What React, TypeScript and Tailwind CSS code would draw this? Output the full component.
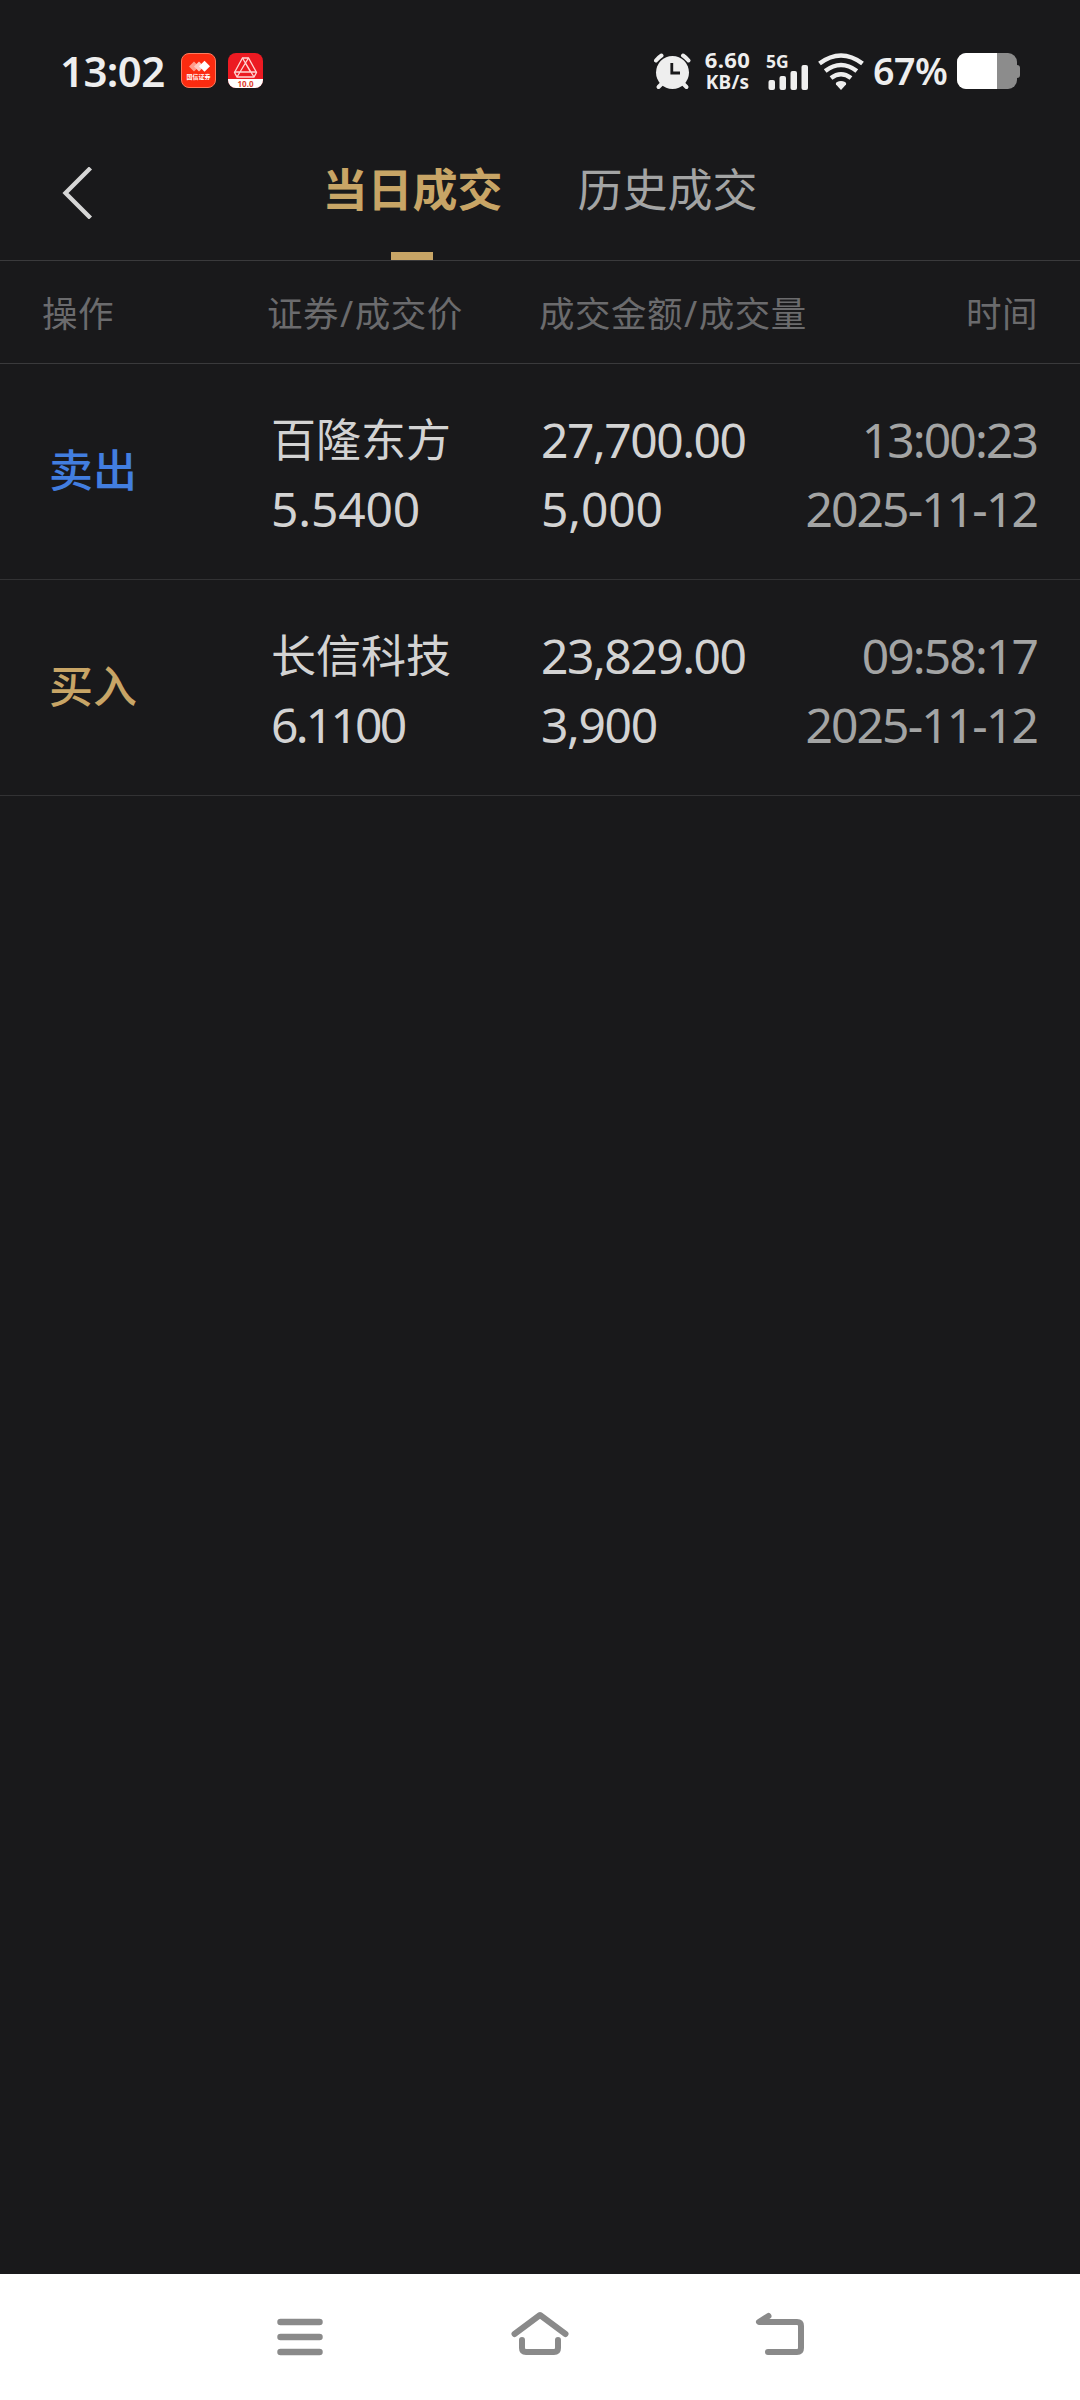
import { useState } from "react";

type DealDTO = {
  id: number;
  isBuy: boolean;
  name: string;
  price: string;
  amount: string;
  volume: string;
  time: string;
  date: string;
};

const deals: DealDTO[] = [
  {
    id: 1,
    isBuy: false,
    name: "百隆东方",
    price: "5.5400",
    amount: "27,700.00",
    volume: "5,000",
    time: "13:00:23",
    date: "2025-11-12",
  },
  {
    id: 2,
    isBuy: true,
    name: "长信科技",
    price: "6.1100",
    amount: "23,829.00",
    volume: "3,900",
    time: "09:58:17",
    date: "2025-11-12",
  },
];

const StatusBar = () => {
  return (
    <div className="flex h-[142px] items-start pl-[60px] pr-[60px] pt-[53px] font-['Noto_Sans','Noto_Sans_CJK_SC',sans-serif] text-[#eeeeee]">
      <div className="w-[121px] whitespace-nowrap text-[42px] font-semibold leading-[35px] tracking-[-0.600px]">13:02</div>
      <div className="flex h-[35px] w-[35px] flex-col items-center rounded-[8px] border border-[#ff7a5c] bg-[#fb2b10]">
        <svg className="mt-[6px] h-[13px] w-[24px] shrink-0" viewBox="0 0 24 13">
          <path d="M7 1.5l5 5-5 5-5-5z" fill="#ff9c8a" />
          <path d="M12 1.5l5 5-5 5-5-5z" fill="#ffc9bf" />
          <path d="M17.500.8l5.500 5.500-5.500 5.500-5.500-5.500z" fill="#fff" />
        </svg>
        <div className="whitespace-nowrap text-[6px] font-bold leading-[8px] text-white">国信证券</div>
      </div>
      <div className="ml-[12px] flex h-[35px] w-[35px] flex-col items-center overflow-hidden rounded-[8px] bg-[#ec1a22]">
        <svg className="mt-[4px] h-[22px] w-[25px] shrink-0" viewBox="0 0 25 22" fill="none" stroke="#ffd5d2" strokeWidth="1.300">
          <path d="M9.500 1h6l8 14.500-2.500 4.500H4L1.500 15.500z" />
          <path d="M9.500 1l8 14H1.500M15.500 1L7 15l-3 5M12.500 6l8.500 14M17.500 15h6" />
        </svg>
        <div className="h-[9px] w-full shrink-0 bg-white text-center text-[8px] font-bold leading-[9px] text-[#e0402c]">10.0</div>
      </div>

      <svg className="ml-[391px] h-[37px] w-[37px]" viewBox="0 0 37 37">
        <g stroke="#eeeeee" strokeWidth="4" strokeLinecap="round" fill="none">
          <path d="M2 7.500Q4.500 4.500 7.500 2.500M34.500 7.500Q32 4.500 29 2.500" />
          <path d="M4.500 34l4-4M32.500 34l-4-4" />
        </g>
        <circle cx="18.500" cy="19.500" r="16.500" fill="#eeeeee" />
        <path d="M17.800 10v10H26" stroke="#19191b" strokeWidth="2.800" fill="none" />
      </svg>
      <div className="ml-[11px] mt-[-5px] flex w-[51px] flex-col items-center whitespace-nowrap font-bold">
        <span className="text-[22px] leading-[23px] tracking-[0.4px]">6.60</span>
        <span className="text-[19px] leading-[23px] tracking-[0.2px]">KB/s</span>
      </div>
      <div className="ml-[13px] flex w-[42px] flex-col">
        <span className="h-[15px] text-[17.500px] font-bold leading-[16px]">5G</span>
        <svg className="mt-[-3px] h-[25px] w-[42px]" viewBox="0 0 42 25" fill="#eeeeee">
          <rect x="2.500" y="15" width="6.500" height="10" rx="2" />
          <rect x="13.500" y="11" width="6.500" height="14" rx="2" />
          <rect x="24.500" y="6" width="6.500" height="19" rx="2" />
          <rect x="35.500" y="0" width="6.500" height="25" rx="2" />
        </svg>
      </div>
      <svg className="ml-[10px] h-[37px] w-[46px] shrink-0" viewBox="0 0 46 37">
        <g stroke="#eeeeee" strokeWidth="4.600" fill="none">
          <path d="M1.500 10.500Q23 -5.500 44.500 10.500" />
          <path d="M7.200 18Q23 6 38.800 18" />
          <path d="M13 25Q23 17.500 33 25" />
        </g>
        <path d="M23 37l-5-5.500q-.8-1.800 1-2.600 4-1.700 8 0 1.800.8 1 2.600z" fill="#eeeeee" />
      </svg>
      <div className="ml-[9px] w-[83px] whitespace-nowrap text-[37.500px] font-semibold leading-[36px] tracking-[-0.4px]">67%</div>
      <div className="ml-auto flex items-center">
        <div className="flex h-[36px] w-[60px] overflow-hidden rounded-[9px] bg-[#8c8c8c]">
          <div className="h-full w-[40px] bg-white"></div>
        </div>
        <div className="h-[13px] w-[3px] rounded-r bg-[#8c8c8c]"></div>
      </div>
    </div>
  );
};

const DealRow = (props: { deal: DealDTO }) => {
  const { deal } = props;

  function dealType(isBuy: boolean) {
    if (isBuy) {
      return <div className="mt-[-6px] text-[44px] font-medium text-[#c8a566]">买入</div>;
    }
    return <div className="mt-[-6px] text-[44px] font-medium text-[#427ee0]">卖出</div>;
  }

  function tracking(value: string) {
    if (value.includes("11")) {
      return "tracking-[-2.800px]";
    }
    return value.includes("9") ? "tracking-[-1.400px]" : "tracking-[-0.200px]";
  }

  return (
    <li className="grid h-[216px] grid-cols-[222px_270px_1fr_auto] items-center whitespace-nowrap border-b border-[#323234] pl-[49px] pr-[43px] pt-[4px] text-[48px] leading-[69px] text-[#d3d3d3]">
      {dealType(deal.isBuy)}
      <div>
        <div className="text-[45px]">{deal.name}</div>
        <div className={tracking(deal.price)}>{deal.price}</div>
      </div>
      <div>
        <div className="tracking-[-1.500px]">{deal.amount}</div>
        <div className={tracking(deal.volume)}>{deal.volume}</div>
      </div>
      <div className="text-right tracking-[-1.900px] text-[#a3a4a4]">
        <div>{deal.time}</div>
        <div>{deal.date}</div>
      </div>
    </li>
  );
};

const App = () => {
  const [tab, setTab] = useState<string>("today");

  const tabs = [
    { id: "today", label: "当日成交" },
    { id: "history", label: "历史成交" },
  ];

  return (
    <div className="flex h-[2400px] w-[1080px] flex-col overflow-hidden bg-[#19191b] font-['Noto_Sans','Noto_Sans_CJK_SC',sans-serif]">
      <StatusBar />

      <div className="grid h-[119px] grid-cols-[1fr_auto_1fr] border-b border-[#3a3a3c]">
        <button className="pl-[61px]">
          <svg className="mt-[-16px] h-[52px] w-[32px]" viewBox="0 0 32 52" fill="none" stroke="#d6d6d6" strokeWidth="4.300">
            <path d="M29.500 1L4.500 26l25 25" />
          </svg>
        </button>
        <div className="flex gap-[75px]">
          {tabs.map((t) => (
            <button
              key={t.id}
              onClick={() => setTab(t.id)}
              className={
                tab === t.id
                  ? "flex flex-col items-center justify-between text-[45px] font-bold text-[#c8a566]"
                  : "flex flex-col items-center justify-between text-[45px] text-[#a3a4a4]"
              }
            >
              <span className="mt-[14px] leading-[68px]">{t.label}</span>
              {tab === t.id ? <span className="h-[8px] w-[42px] bg-[#c8a566]"></span> : null}
            </button>
          ))}
        </div>
        <div></div>
      </div>

      <div className="grid h-[103px] grid-cols-[225px_272px_1fr_auto] items-center border-b border-[#3a3a3c] pl-[42px] pr-[42px] pt-[3px] text-[35.500px] tracking-[0.500px] text-[#6b6b6d]">
        <div>操作</div>
        <div>证券<span className="mx-[1px]">/</span>成交价</div>
        <div>成交金额<span className="mx-[1px]">/</span>成交量</div>
        <div>时间</div>
      </div>

      <ul className="flex-1">
        {deals.map((deal) => (
          <DealRow key={deal.id} deal={deal} />
        ))}
      </ul>

      {/* system navigation */}
      <div className="flex h-[126px] items-start justify-center gap-[180px] bg-white pt-[33px]">
        <svg className="h-[60px] w-[60px]" viewBox="0 0 60 60" stroke="#8a8a8a" strokeWidth="6.500" strokeLinecap="round">
          <path d="M10.500 15h39M10.500 30h39M10.500 45h39" />
        </svg>
        <svg className="h-[60px] w-[60px]" viewBox="0 0 60 60" fill="none" stroke="#8a8a8a" strokeWidth="6" strokeLinecap="round" strokeLinejoin="round">
          <path d="M4.500 27L30 8l25.500 19" />
          <path d="M12 33v8q0 4 4 4h28q4 0 4-4v-8" />
        </svg>
        <svg className="h-[60px] w-[60px]" viewBox="0 0 60 60" fill="none" stroke="#8a8a8a" strokeWidth="6" strokeLinecap="round" strokeLinejoin="round">
          <path d="M18.500 9L9 15h38q4 0 4 4v22q0 4-4 4H18" />
        </svg>
      </div>
    </div>
  );
};

export default App;
